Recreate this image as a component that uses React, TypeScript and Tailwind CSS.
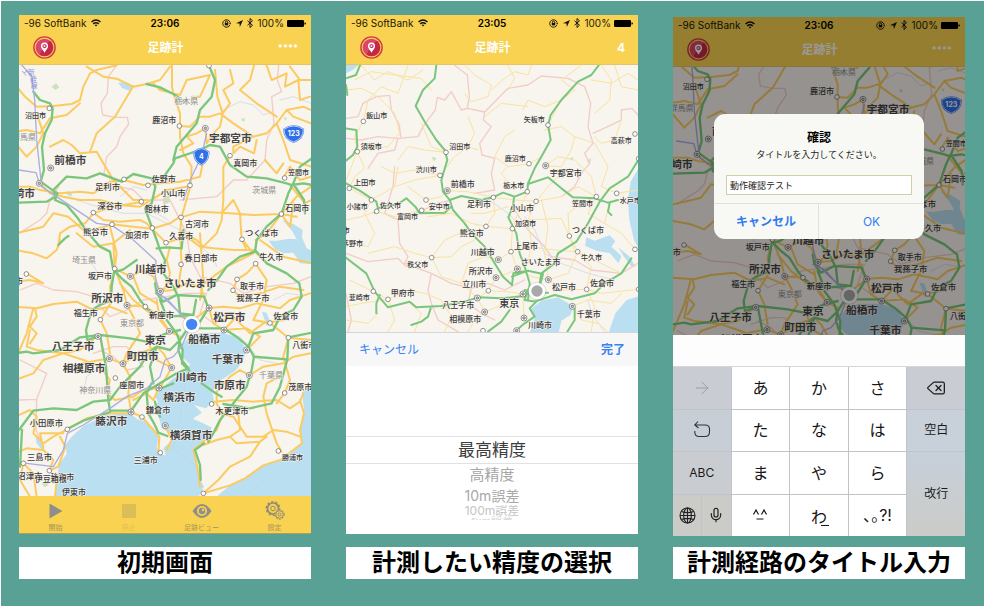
import React, { useId, useState } from "react";
import { ArrowRight, Delete, Mic } from "lucide-react";

type Label = [text: string, x: number, y: number, size: number];
type Point = [x: number, y: number];

interface MapData {
  water: string[];
  parks: string[];
  borders: string[];
  rails: string[];
  minor: string[];
  roads: string[];
  highways: string[];
  towns: Point[];
  cities: Point[];
  labels: Label[];
  regions: Label[];
}

const kantoSouth: MapData = {
  water: [
    "M165,1490L172,1430L178,1392L200,1362L196,1335L215,1310L250,1278L320,1245L390,1240L412,1258L440,1266L455,1290L476,1308L470,1340L476,1362L498,1366L490,1345L515,1322L510,1300L485,1285L478,1256L462,1225L474,1205L466,1190L482,1168L520,1135L560,1112L570,1092L545,1070L550,1030L575,1005L610,998L665,998L715,1012L740,1050L728,1085L706,1112L664,1140L636,1175L642,1200L618,1225L582,1215L606,1238L578,1256L606,1268L634,1282L632,1310L606,1325L580,1350L590,1385L596,1430L612,1460L596,1490Z",
    "M936,1150L906,1178L912,1228L902,1280L904,1330L880,1350L850,1376L790,1396L740,1432L690,1456L650,1490L936,1490Z",
    "M848,660L880,672L908,690L906,712L920,745L936,752L936,792L900,790L880,758L850,760L825,748L806,722L830,722L868,716L890,718L876,692Z",
    "M786,935L800,938L812,972L800,978Z",
    "M355,248L378,246L400,258L388,272L366,264Z",
    "M106,1304L118,1312L130,1340L124,1348L110,1330Z",
    "M200,572L216,580L214,590L202,584Z",
  ],
  parks: [
    "M155,260L168,250L178,262L166,270Z",
    "M488,592L508,586L510,606L490,614Z",
    "M126,1450L140,1440L146,1456L132,1462Z",
    "M724,356L734,354L734,364L726,364Z",
    "M850,354L860,352L858,362Z",
  ],
  borders: [
    "M350,196L325,230L322,280L303,310L308,345L345,352L382,352L386,372L360,410L350,440L320,470L312,520L360,560L400,570L430,600L510,600L530,640",
    "M836,196L832,240L845,275L815,290L822,370L800,420L795,480L740,540L700,540L650,590L540,600",
    "M176,560L150,600L140,640L120,660L57,700",
    "M60,870L110,850L160,870L230,875L280,890L300,920L330,950L380,930L430,900L500,890L560,880L620,880",
    "M530,640L560,700L570,770L600,830L690,850L730,880L800,860L880,850L933,830",
    "M57,1200L110,1198L140,1120L60,1080M280,1060L340,1040L380,1040L430,1100L380,1110L340,1070L300,1050",
    "M620,880L600,940L640,970",
    "M110,1200L108,1290L130,1340",
  ],
  rails: [
    "M66,196L96,230L104,300L110,420L125,560L200,610L290,670L336,676L400,720L468,782L466,830L478,880L530,930L572,975L545,1040L520,1070L495,1080L480,1130L440,1165L380,1190L330,1225L250,1275L202,1300L190,1350L160,1400L80,1390",
    "M57,510L108,518L118,550",
    "M550,600L575,530L604,470L620,400",
    "M466,880L500,895L572,975",
  ],
  minor: [
    "M670,330L720,305L760,315L790,345L820,335",
    "M840,300L880,290L933,310",
    "M200,590L260,610L310,625L370,640L440,640L500,670L560,700L600,740L640,770L650,800",
    "M360,590L400,560L440,570",
    "M720,1010L780,1080L830,1090",
    "M760,700L740,690L720,700",
    "M430,1430L520,1345L530,1300L550,1200L560,1110M520,1345L590,1400M730,1490L800,1440L840,1420M470,640L505,660",
    "M250,1180L260,1130L300,1100",
    "M820,900L860,880L900,885M270,780L300,830",
  ],
  roads: [
    "M46,255L75,290L110,320L160,318L215,312L240,300L250,260L270,220L290,210L350,196",
    "M46,395L80,390L120,400L150,355L200,345L240,310",
    "M150,440L190,420L215,435L240,460L290,455L310,490L340,540L400,600L440,600",
    "M46,430L80,470L110,440L130,400L110,340",
    "M260,200L310,230L350,236L400,260L440,252L480,240L510,200M400,258L345,350L290,400L270,455",
    "M516,196L516,260L520,280L540,340L540,378L540,410L550,460L575,500L572,556L545,650L540,700L545,793L535,860",
    "M460,250L480,270L540,285L560,240L630,225L600,290L575,290",
    "M540,378L570,380L600,350L630,350L660,340L700,370L760,410L800,400L830,370L860,330L910,320L933,330",
    "M645,210L652,290L668,340L660,380L640,400L620,430L616,385M668,340L690,310L670,270L700,250L690,210",
    "M762,196L750,240L720,270L770,310L830,350M800,196L815,240L860,220L855,260L895,240L900,300L930,290M870,200L900,240L933,240",
    "M760,410L700,440L700,460L720,440L762,460L770,420M616,385L590,400L560,410L580,430L540,450",
    "M860,330L880,350L933,370M830,370L850,420L870,480L933,500M795,480L830,520L850,490",
    "M690,467L670,500L670,600L665,660L650,700L610,740L590,720L550,700",
    "M46,560L90,560L120,570L180,580L240,575L280,580L330,545L372,540L430,555L480,550L540,545L600,530L610,480",
    "M120,550L150,580L190,590L240,600L300,600L360,615L420,620L470,590L500,570L560,560",
    "M46,700L90,690L130,680L160,640L205,650L250,690L280,690L336,673L400,680L456,686L510,670L540,650",
    "M175,740L180,700L210,680L255,670L280,640L340,620L424,606",
    "M280,638L310,660L360,665L420,660L440,670L470,700L498,728L560,710L600,740L640,745L700,750L760,750L800,790",
    "M46,750L100,760L140,775L170,750L180,720",
    "M330,680L350,760L344,806L330,860L332,910L301,959L320,1000L330,1060",
    "M230,700L280,740L340,730L390,690M340,730L344,806L391,829L430,810L460,830L480,874L500,860L510,820L500,780L510,740",
    "M344,806L370,870L381,916L400,950L420,1000L380,1060L369,1091L390,1130L385,1180L393,1236",
    "M381,916L436,920L480,950L508,994L540,1010M360,850L400,900L450,940M400,830L420,880L470,910",
    "M46,845L90,840L130,850L80,820M46,920L110,925L160,912L230,905L280,930L330,920L380,940",
    "M105,925L110,950L90,980L110,1000L90,1030M90,990L80,1040L110,1050L190,1060L240,1050L290,1010",
    "M46,1140L100,1120L130,1080L190,1060L250,1080L300,1100L330,1140L320,1180L345,1200L400,1190L430,1170L477,1164",
    "M250,1090L300,1080L328,1076L369,1091L420,1060L470,1040L490,1060L515,1103L480,1164",
    "M480,874L520,870L560,850L600,860L627,924L640,970L672,990L740,985L780,1010L750,1040",
    "M627,924L670,920L720,925L770,910L840,925L870,900L930,880M640,970L700,950L750,1000L790,970L850,960",
    "M600,860L640,830L680,800L720,780L760,760L726,718M600,700L610,840L600,900",
    "M543,652L600,635L690,640L760,645L844,642L890,590L933,560M664,640L700,600L720,640L725,718L740,750",
    "M767,791L740,820L711,838L699,871L720,890L780,880L840,860L910,870M767,720L800,700L844,642L890,650M780,720L850,770L933,790",
    "M844,642L870,680L880,610M850,534L870,500L900,540L933,530M870,555L915,610L933,600",
    "M767,791L800,840L790,900L760,960L810,969L865,1013L933,1020M865,1013L850,1070L870,1140L854,1179L830,1210",
    "M748,1126L790,1100L850,1090L880,1070L933,1060M748,1126L720,1110L690,1130L650,1175L650,1212L670,1240L650,1290L610,1325L580,1350L592,1400L600,1460",
    "M640,1205L700,1200L760,1205L830,1200L870,1225L900,1205L910,1180M660,1240L700,1250L720,1280L740,1310L790,1310L820,1290L860,1295L900,1310",
    "M610,1335L650,1320L690,1310L710,1330L780,1325L800,1310M690,1310L720,1290L715,1240M780,1325L750,1370L690,1400L655,1440L610,1480",
    "M800,1240L790,1190L800,1150L840,1130M800,1240L830,1330L845,1355M900,1200L912,1240L900,1290L906,1330L880,1350L845,1378L790,1396L735,1435L690,1456L610,1480",
    "M393,1236L426,1251L460,1290L478,1310L475,1360M496,1277L515,1320L500,1350M477,1164L460,1200L440,1180L400,1200",
    "M46,1250L90,1230L110,1250L100,1300L130,1330L160,1310L202,1288L260,1255L330,1240L390,1240",
    "M46,1360L80,1345L130,1350L160,1380L148,1412L175,1400L196,1340L180,1310M70,1390L60,1440L90,1490M148,1412L170,1440L165,1490",
    "M130,1345L120,1300L190,1300M70,1390L100,1420L110,1490",
    "M515,1103L470,1080L450,1040M508,994L480,960L470,900M540,950L580,960L627,924M672,990L700,960L660,940",
    "M46,1080L80,1000L100,925",
  ],
  highways: [
    "M100,275L120,300L150,310L158,325L155,360L135,400L126,440L132,510L122,545L150,565L172,580L165,600L200,615L230,650L265,700L300,740L330,755L338,800L345,815L370,840L395,860L420,900L440,925L460,940",
    "M46,608L140,605L166,590L160,570L200,530L260,535L300,520L365,545L400,522L455,535L490,532L520,490L525,475L600,450L630,435L660,440L690,495L740,530L800,535L860,550L875,555L910,550L936,555",
    "M627,197L645,240L635,290L600,330L590,370L530,440L520,480M455,535L466,560L455,610L435,625L455,680L470,720L480,750L495,780L490,820L520,860L535,890L540,940",
    "M440,252L480,262L520,282L560,310",
    "M936,475L900,500L880,550L865,580L845,640L800,680L770,720L765,755L720,770L680,800L655,835L625,870",
    "M765,750L800,790L860,820L898,850L905,890L880,930L840,950L820,990L760,1000L745,1040",
    "M880,552L912,600L915,640M175,735L195,715L205,708",
    "M410,780L370,808L342,818L335,860L334,880M470,745L500,742L545,745L550,690",
    "M46,1060L80,1055L100,1060L180,1050L240,1012L300,1005L390,1015L440,1025L500,1000L540,990",
    "M262,1020L258,990L275,930L300,915L325,905M262,1020L300,1008",
    "M300,1005L318,1100L325,1200L330,1232L390,1232",
    "M57,1290L100,1232L160,1225L230,1230L280,1205L330,1200L360,1160L420,1100L445,1060L470,1040",
    "M200,1288L250,1262L330,1236",
    "M455,1150L440,1180L445,1240L462,1270L475,1298L502,1308",
    "M395,1230L430,1180L480,1150L530,1120L565,1105L545,1080L535,1050L540,1020L560,990L600,965L625,925L612,890L530,885L490,905L470,880L465,850",
    "M600,985L670,985L710,1010L745,1040L762,1070L755,1110L740,1160L700,1210L660,1260L640,1300L625,1325",
    "M500,960L530,1000L548,1050L546,1090L568,1112M480,900L500,950L580,945L588,900M460,1150L450,1100L470,1040L510,1050L540,1020",
    "M760,1070L862,1078L865,1012L936,998M862,1078L840,1160L815,1210L750,1225L670,1212",
    "M605,1150L640,1175L665,1190M470,1170L520,1150",
    "M612,1330L585,1350L600,1395L602,1440M66,1290L60,1400M540,940L580,945M465,1205L470,1230L480,1250",
  ],
  towns: [
    [148, 325], [538, 378], [690, 467], [372, 538], [444, 556], [570, 556], [854, 534],
    [424, 605], [280, 638], [336, 673], [457, 684], [543, 652], [844, 642], [498, 728],
    [726, 718], [767, 791], [543, 793], [344, 806], [79, 822], [711, 838], [699, 871],
    [436, 920], [301, 959], [810, 969], [865, 1013], [346, 1134], [854, 1179], [635, 1212],
    [426, 1251], [202, 1288], [481, 1358], [70, 1390], [148, 1412], [835, 1353], [610, 1480],
    [627, 197],
  ],
  cities: [
    [616, 385], [152, 504], [118, 550], [391, 829], [481, 874], [381, 916], [627, 924],
    [672, 990], [508, 994], [294, 1009], [740, 1050], [748, 1126], [328, 1076], [369, 1091],
    [515, 1103], [477, 1164], [393, 1236], [496, 1277],
  ],
  labels: [
    ["宇都宮市", 627, 414, 32], ["前橋市", 163, 480, 32], ["高崎市", 9, 580, 32],
    ["川越市", 404, 806, 32], ["さいたま市", 491, 850, 32], ["所沢市", 274, 893, 32],
    ["松戸市", 640, 952, 32], ["東京", 434, 1020, 32], ["船橋市", 565, 1017, 32],
    ["八王子市", 155, 1038, 32], ["町田市", 380, 1068, 32], ["相模原市", 188, 1104, 32],
    ["川崎市", 526, 1131, 32], ["千葉市", 635, 1077, 32], ["市原市", 641, 1154, 32],
    ["横浜市", 490, 1192, 32], ["藤沢市", 286, 1263, 32], ["横須賀市", 509, 1304, 32],
    ["沼田市", 75, 345, 21], ["鹿沼市", 457, 359, 24], ["真岡市", 700, 489, 24],
    ["足利市", 285, 560, 25], ["佐野市", 455, 537, 24], ["小山市", 482, 580, 25],
    ["深谷市", 292, 619, 25], ["館林市", 434, 627, 24], ["熊谷市", 249, 696, 25],
    ["加須市", 376, 706, 24], ["久喜市", 508, 708, 24], ["古河市", 555, 673, 24],
    ["石岡市", 856, 623, 24], ["つくば市", 735, 698, 25], ["牛久市", 778, 771, 24],
    ["春日部市", 553, 774, 25], ["坂戸市", 264, 829, 24], ["取手市", 720, 859, 24],
    ["我孫子市", 709, 895, 25], ["新座市", 447, 944, 25], ["佐倉市", 820, 949, 25],
    ["福生市", 221, 940, 24], ["茂原市", 865, 1160, 24], ["八街市", 877, 1034, 24],
    ["座間市", 358, 1156, 25], ["鎌倉市", 437, 1231, 25], ["木更津市", 646, 1234, 25],
    ["小田原市", 89, 1268, 25], ["三島市", 81, 1370, 25], ["三浦市", 401, 1380, 24],
    ["沼津市", 52, 1428, 25], ["熱海市", 151, 1431, 24], ["伊東市", 186, 1475, 24],
    ["勝浦市", 846, 1372, 21], ["笠間市", 864, 517, 21], ["市", 45, 843, 24],
    ["伊豆箱根", 104, 1436, 24],
  ],
  regions: [
    ["栃木県", 523, 302, 24], ["群馬県", 36, 411, 24], ["茨城県", 757, 569, 24],
    ["埼玉県", 216, 780, 24], ["東京都", 360, 969, 24], ["神奈川県", 238, 1171, 24],
    ["千葉県", 777, 1124, 24],
  ],
};

const kantoWide: MapData = {
  water: [
    "M50,190L92,196L74,210L50,222Z",
    "M934,500L908,545L900,600L904,660L918,720L934,750Z",
    "M774,712L800,722L845,706L862,724L850,740L880,768L872,790L846,760L806,752L772,738Z",
    "M870,742L905,770L922,800L912,802L888,770Z",
    "M934,888L896,900L862,940L842,998L934,998Z",
    "M606,998L622,950L606,930L640,902L690,892L735,918L728,944L700,962L692,998Z",
  ],
  parks: ["M310,470L326,474L318,484Z", "M724,476L736,470L732,482Z", "M776,484L790,474L786,490Z"],
  borders: [
    "M380,196L418,225L424,290L418,325L400,330L370,275L350,300L328,292L322,330L285,380L270,410L210,415L200,450L150,460L120,505",
    "M54,355L90,350L105,310L145,290L185,286L190,330L214,375L218,410",
    "M418,325L470,336L540,265L600,255L640,228L720,235L770,260L788,310L780,380L795,430L770,460L785,490L760,520L740,560L700,590",
    "M470,336L466,360L490,380L455,430L462,465L500,475L490,520L500,570L440,580",
    "M54,415L100,420L150,410L210,415M795,400L860,370L880,360L880,330L912,325L930,345",
    "M200,500L195,560L170,640L210,660L215,730L240,770L230,790L310,820L370,850L430,865L480,850L530,870L590,840",
    "M54,760L120,785L210,775L235,800M310,820L300,870L310,910L330,960L390,995",
    "M430,865L420,910L460,940L500,960M560,630L600,690L650,740L670,770L740,780L790,810L880,820L930,790",
    "M54,880L70,960L60,995M370,600L330,610L240,650L210,640",
  ],
  rails: [],
  minor: [
    "M590,650L620,690L650,760L700,790L780,820L860,840",
    "M470,590L540,640L580,680",
    "M780,900L790,940L830,995",
  ],
  roads: [
    "M80,240L130,215L200,225L280,235L310,270M100,196L140,240L180,215L240,240L285,210",
    "M54,270L100,265L150,290L200,340L215,400L180,440L130,445L88,455",
    "M106,364L120,300L160,260L210,280L240,196M410,196L440,225L490,255L480,290L430,305L410,280",
    "M106,364L80,410L88,455L110,505L80,530L64,565M88,455L54,540",
    "M490,270L530,235L560,215L600,225L610,196M540,196L560,235L540,270",
    "M210,480L240,440L290,450L354,457M160,500L200,520L260,510L336,526L380,470L420,440L450,450",
    "M650,390L700,380L740,410L730,450L700,500L653,497M660,375L700,300L740,270L700,240L760,196",
    "M585,330L600,300L650,320L700,300M560,390L530,410L500,470L540,500L603,491L640,470",
    "M470,350L520,310L600,320M820,196L850,240L845,300L800,340M860,196L880,260L930,270M880,360L860,420L820,430L800,410",
    "M790,240L850,250L900,220L930,240M740,410L800,430L840,500L820,560L866,580L930,570",
    "M653,497L690,470L740,480L790,530L805,590L760,610L720,640L724,708",
    "M54,660L100,650L146,634L200,650L281,631L320,640L370,640M64,565L130,600L200,560L260,540L336,526",
    "M130,600L110,640L140,700L120,740L54,725M200,560L210,500M240,560L294,600L340,590L358,572",
    "M358,572L420,575L496,592L560,600L624,604L700,590L750,560L805,590",
    "M300,650L370,640L430,670L474,679L553,686L600,660L700,655L724,708L749,755L820,790L880,820",
    "M496,592L500,640L474,679L440,720L400,740L370,770L311,773L260,760L200,740L120,760",
    "M624,604L600,660L610,730L600,790L568,807L549,755L553,686",
    "M311,773L350,720L395,700M311,773L340,830L400,850L448,894M511,779L470,770L420,790L400,850",
    "M511,779L549,755L600,740L680,750L740,755L724,708M504,833L540,820L568,807L610,830L661,839",
    "M661,839L720,820L749,755L790,800L776,868L820,880L930,868M661,839L700,870L776,868",
    "M64,840L136,874L180,898L240,870L290,880L340,900M54,920L100,910L180,898L200,960L180,995",
    "M448,894L470,936L510,920L560,890L585,882L588,954M504,833L481,872L448,894M481,872L540,875L585,882",
    "M340,900L370,950L350,995M470,936L440,960L420,995M240,905L280,940L260,995M54,960L120,970L150,940",
    "M733,919L780,900L850,910L880,880M733,919L760,960L810,970L840,995M776,868L800,920L790,995",
    "M598,575L570,640L553,686M640,600L660,680L650,760L661,839M430,640L470,640L540,620",
    "M844,610L830,670L880,700L921,748M805,590L780,640L830,670M550,560L520,520L540,500",
    "M280,370L310,440L354,457M420,350L440,400L420,440M700,520L660,560L624,604",
  ],
  highways: [
    "M325,196L320,235L285,270L263,318L290,365L325,420L350,450L358,480L340,540L345,575L365,600L375,630L410,670L430,700L470,740L500,790L525,830L552,855L556,820L600,812",
    "M50,385L85,390L88,440L75,465L50,485",
    "M54,235L84,225L96,196M54,255L58,285",
    "M812,196L790,225L750,245L700,300L668,345L660,375L668,420L640,470L620,505L600,550L598,575L560,590L525,578L495,592L460,600L400,588L365,600",
    "M600,552L660,532L700,565L735,592L800,595L840,608L870,600",
    "M934,475L900,530L845,565L815,605L780,670L745,725L690,760L680,790L640,820L635,850",
    "M558,592L555,620L541,652L565,700L575,760L590,800L605,850L600,900",
    "M50,548L95,572L145,605L150,625L140,638M150,625L210,612L235,595L262,620L275,640L350,638L370,620",
    "M50,770L115,820L140,875L180,922L245,905L265,922L340,918L410,905L450,892L520,895L590,888M155,885L145,910L145,940",
    "M308,925L300,950L280,965L250,975",
    "M620,905L680,885L730,898L800,880L830,850L880,820L910,775",
    "M552,830L600,812L645,822L635,860L600,868L590,900L625,905L605,925L620,950L590,970L560,995M480,995L520,965L545,930",
    "M845,610L840,635L850,645M740,925L740,960L718,995M590,870L620,880L660,878",
  ],
  towns: [
    [106, 364], [88, 455], [354, 457], [660, 375], [603, 491], [921, 402], [336, 526],
    [64, 565], [130, 600], [146, 634], [281, 631], [294, 600], [496, 592], [598, 575],
    [624, 604], [805, 590], [866, 580], [474, 679], [553, 686], [724, 708], [549, 755],
    [749, 755], [921, 748], [311, 773], [136, 874], [180, 898], [481, 872], [776, 868],
    [932, 868], [465, 992], [932, 476],
  ],
  cities: [
    [653, 497], [358, 572], [511, 779], [568, 807], [504, 833], [661, 839], [585, 882],
    [448, 894], [470, 936], [733, 919], [588, 954], [566, 992],
  ],
  labels: [
    ["飯山市", 115, 347, 21], ["須坂市", 98, 438, 21], ["沼田市", 364, 440, 21],
    ["渋川市", 263, 508, 21], ["矢板市", 587, 357, 21], ["鹿沼市", 530, 474, 21],
    ["高萩市", 848, 420, 21], ["前橋市", 368, 551, 24], ["宇都宮市", 665, 520, 24],
    ["上田市", 77, 547, 22], ["小諸市", 56, 620, 21], ["佐久市", 156, 616, 21],
    ["富岡市", 207, 650, 21], ["安中市", 302, 619, 21], ["足利市", 417, 613, 24],
    ["栃木市", 526, 556, 21], ["小山市", 546, 625, 24], ["笠間市", 732, 610, 21],
    ["水戸市", 875, 602, 21], ["加須市", 561, 669, 21], ["熊谷市", 395, 700, 24],
    ["つくば市", 732, 690, 24], ["上尾市", 558, 737, 24], ["牛久市", 759, 773, 21],
    ["川越市", 428, 757, 24], ["さいたま市", 578, 787, 24], ["秩父市", 238, 793, 21],
    ["所沢市", 422, 813, 24], ["立川市", 403, 853, 24], ["松戸市", 672, 861, 24],
    ["佐倉市", 786, 850, 24], ["東京", 514, 909, 30], ["甲府市", 188, 880, 24],
    ["韮崎市", 62, 893, 21], ["八王子市", 343, 916, 24], ["相模原市", 364, 958, 24],
    ["川崎市", 600, 976, 24], ["千葉市", 746, 942, 24], ["茅野市", 42, 730, 21],
    ["市", 44, 692, 21],
  ],
  regions: [],
};

interface MapProps {
  data: MapData;
  viewBox: string;
  roadWidth: number;
  highwayWidth: number;
  roadColor: string;
  here: Point;
  hereColor: string;
  title: string;
  children?: React.ReactNode;
}

function MapView({ data, viewBox, roadWidth, highwayWidth, roadColor, here, hereColor, title, children }: MapProps) {
  return (
    <svg viewBox={viewBox} role="img" aria-label={title} className="block w-full overflow-hidden bg-[#f8f4ee]">
      <path d={data.water.join("")} fill="#b9dff1" />
      <path d={data.parks.join("")} fill="#c9e3bf" />
      <g fill="none" strokeLinejoin="round" strokeLinecap="round">
        <path d={data.borders.join("")} stroke="#f2cdc7" strokeWidth="4" />
        <path d={data.minor.join("")} stroke="#c9d2e4" strokeWidth="2" />
        <path d={data.roads.join("")} stroke={roadColor} strokeWidth={roadWidth} />
        <path d={data.highways.join("")} stroke="#79c67c" strokeWidth={highwayWidth} />
        <path d={data.rails.join("")} stroke="#a9aee0" strokeWidth="4" />
      </g>
      <g fill="#fff" stroke="#5e5e5e" strokeWidth="2">
        {data.towns.map(([x, y]) => (
          <circle key={`${x}-${y}`} cx={x} cy={y} r="7" />
        ))}
        {data.cities.map(([x, y]) => (
          <g key={`${x}-${y}`}>
            <circle cx={x} cy={y} r="9" />
            <circle cx={x} cy={y} r="4" fill="#bbb" />
          </g>
        ))}
      </g>
      {children}
      <g strokeLinejoin="round" stroke="#f8f4ee" strokeOpacity="0.8" strokeWidth="4" className="[paint-order:stroke]">
        {data.regions.map(([text, x, y, size]) => (
          <text key={text} x={x} y={y + size * 0.37} fontSize={size} fill="#8c8c8c">
            {text}
          </text>
        ))}
        {data.labels.map(([text, x, y, size]) => (
          <text
            key={`${text}-${y}`}
            x={x}
            y={y + size * 0.37}
            fontSize={size}
            fontWeight={size > 30 ? 700 : 500}
            fill={size > 30 ? "#444" : "#3a3a3a"}
          >
            {text}
          </text>
        ))}
      </g>
      <circle cx={here[0]} cy={here[1]} r="28" fill="#8a8a8a" opacity="0.25" />
      <circle cx={here[0]} cy={here[1]} r="25" fill="#fff" />
      <circle cx={here[0]} cy={here[1]} r="17" fill={hereColor} />
    </svg>
  );
}

function Shield({ x, y, halfWidth: w, text }: { x: number; y: number; halfWidth: number; text: string }) {
  return (
    <g transform={`translate(${x} ${y})`}>
      <path
        d={`M${-w},-14Q${-w / 2},-24 0,-24Q${w / 2},-24 ${w},-14Q${w},14 0,24Q${-w},14 ${-w},-14Z`}
        fill="#2f6fe8"
        stroke="#2f6fe8"
        strokeWidth="5"
      />
      <path
        d={`M${-w},-14Q${-w / 2},-24 0,-24Q${w / 2},-24 ${w},-14Q${w},14 0,24Q${-w},14 ${-w},-14Z`}
        fill="#2f6fe8"
        stroke="#fff"
        strokeWidth="2"
      />
      <text y="7" textAnchor="middle" fontSize="21" fontWeight="700" fill="#fff">
        {text}
      </text>
    </g>
  );
}

function SouthMap({ viewBox, hereColor, title }: { viewBox: string; hereColor: string; title: string }) {
  return (
    <MapView
      data={kantoSouth}
      viewBox={viewBox}
      roadWidth={6}
      highwayWidth={7}
      roadColor="#fbcb62"
      here={[575, 973]}
      hereColor={hereColor}
      title={title}
    >
      <Shield x={604} y={470} halfWidth={22} text="4" />
      <Shield x={881} y={402} halfWidth={29} text="123" />
      <g fill="#8b93d6" fontSize="20">
        <text x="66" y="212" transform="rotate(50 66 212)">上</text>
        <text x="84" y="226">新</text>
        <text x="90" y="245">幹</text>
        <text x="92" y="264">線</text>
      </g>
    </MapView>
  );
}

function StatusBar({ time }: { time: string }) {
  return (
    <div className="grid h-4 grid-cols-[1fr_auto_1fr] items-center px-[5px] font-['Inter','Noto_Sans_CJK_JP',sans-serif] text-[10px] leading-4 text-[#1c1805]">
      <span className="flex items-center gap-[5px] whitespace-nowrap">
        -96 SoftBank
        <svg viewBox="0 0 20 15" className="h-2 w-[10px]" fill="none" stroke="#111" strokeWidth="2.8">
          <path d="M1 5.5Q10-2.5 19 5.5M4.5 9.3Q10 4.6 15.5 9.3" />
          <path d="M7.3 11.5Q10 9.3 12.7 11.5L10 14.4Z" fill="#111" stroke="none" />
        </svg>
      </span>
      <span className="font-semibold text-black">{time}</span>
      <span className="flex items-center justify-end gap-1">
        <svg viewBox="0 0 24 24" className="h-[9px] w-[9px]" fill="none" stroke="#111" strokeWidth="2.4">
          <path d="M21.5 9A10 10 0 1 0 21.5 15M18.5 9.5L22 13L25 9" />
          <rect x="7.5" y="10.5" width="9" height="6.5" fill="#111" stroke="none" />
          <path d="M9 11V8.500a3 3 0 0 1 6 0V11" />
        </svg>
        <svg viewBox="0 0 20 20" className="ml-px h-[7px] w-[7px]" fill="#111">
          <path d="M20 0L11 20L10 10L0 9Z" />
        </svg>
        <svg viewBox="0 0 12 20" className="h-[10px] w-[6px]" fill="none" stroke="#111" strokeWidth="1.9">
          <path d="M1 5.500L11 14.500L6 19V1L11 5.500L1 14.500" />
        </svg>
        <span>100%</span>
        <svg viewBox="0 0 38 14" className="-ml-px h-[7px] w-[19px]" fill="#000">
          <rect width="34" height="14" rx="2.500" />
          <path d="M35 4.500Q38 5 38 7Q38 9 35 9.500Z" />
        </svg>
      </span>
    </div>
  );
}

function Logo() {
  const gradient = useId();
  return (
    <svg viewBox="0 0 48 48" className="h-[23px] w-[23px]">
      <defs>
        <linearGradient id={gradient} x1="0.1" y1="0.2" x2="0.9" y2="0.8">
          <stop offset="0.5" stopColor="#d9456b" />
          <stop offset="0.5" stopColor="#c42846" />
        </linearGradient>
      </defs>
      <circle cx="24" cy="24" r="22.200" fill="#fbd04c" stroke="#d13a4f" strokeWidth="3" />
      <circle cx="24" cy="24" r="18.500" fill={`url(#${gradient})`} />
      <path
        d="M24 35C21 29 16.500 26 16.500 21a7.500 7.500 0 0 1 15 0C31.500 26 27 29 24 35ZM24 16.500a4.500 4.500 0 1 0 0 9a4.500 4.500 0 0 0 0-9Z"
        fill="#fff"
        fillRule="evenodd"
      />
      <circle cx="24" cy="21" r="1.800" fill="#fff" />
    </svg>
  );
}

function NavBar({ time, accuracy }: { time: string; accuracy: string }) {
  return (
    <header className="flex h-[50px] flex-col bg-[#f8d250]">
      <StatusBar time={time} />
      <div className="grid flex-1 grid-cols-[1fr_auto_1fr] items-center border-b border-[#e2c469] pr-[13px] pl-[14px]">
        <Logo />
        <h2 className="text-[12px] leading-4 font-bold text-white">足跡計</h2>
        <button
          type="button"
          aria-label="精度"
          className={`justify-self-end leading-4 font-bold text-white ${accuracy === "****" ? "text-[9px]" : "text-[12px]"}`}
        >
          {accuracy}
        </button>
      </div>
    </header>
  );
}

function TabBar() {
  const item = "flex flex-col items-center justify-between pt-[3px] pb-px text-[7px] leading-[9px]";
  return (
    <nav className="grid h-[38px] grid-cols-4 border-b border-[#b39e55] bg-[#f8d250]">
      <button type="button" className={`${item} text-[#a9955a]`}>
        <svg viewBox="0 0 24 24" className="h-6 w-6" fill="#8f8e8b">
          <path d="M5.500 4.500L18.500 12L5.500 19.500Z" />
        </svg>
        開始
      </button>
      <button type="button" disabled className={`${item} text-[#dcbe58]`}>
        <svg viewBox="0 0 24 24" className="h-6 w-6" fill="#dcbe58">
          <rect x="5" y="5" width="14" height="14" />
        </svg>
        停止
      </button>
      <button type="button" className={`${item} text-[#a9955a]`}>
        <svg viewBox="0 0 24 24" className="h-6 w-6" fill="#8f8e8b">
          <path d="M2.500 12Q7 5 12 5Q17 5 21.500 12Q17 19 12 19Q7 19 2.500 12Z" />
          <circle cx="12" cy="12" r="5" fill="#f8d250" />
          <circle cx="12" cy="12" r="3.200" />
          <circle cx="13" cy="11" r="1.200" fill="#f8d250" />
        </svg>
        足跡ビュー
      </button>
      <button type="button" className={`${item} text-[#a9955a]`}>
        <svg viewBox="0 0 24 24" className="h-6 w-6" fill="none" stroke="#8f8a78">
          <circle cx="10" cy="9.500" r="5.500" strokeWidth="1.600" />
          <circle cx="10" cy="9.500" r="6.700" strokeWidth="1.400" strokeDasharray="2.400 1.800" />
          <circle cx="10" cy="9.500" r="2.300" strokeWidth="1" />
          <circle cx="16.500" cy="15.500" r="4.800" fill="#f8d250" stroke="none" />
          <circle cx="16.500" cy="15.500" r="3.800" strokeWidth="1" />
          <circle cx="16.500" cy="15.500" r="4.700" strokeWidth="1" strokeDasharray="1.700 1.300" />
          <circle cx="16.500" cy="15.500" r="1.500" strokeWidth="1" />
        </svg>
        設定
      </button>
    </nav>
  );
}

function AccuracyPicker() {
  return (
    <div>
      <div className="flex h-[34px] items-center justify-between border-t border-[#d5d5d5] bg-[#f7f7f8] px-[13px] leading-4 text-[#3b83f0]">
        <button type="button" className="text-[12px]">キャンセル</button>
        <button type="button" className="text-[12px] font-bold">完了</button>
      </div>
      <ul className="flex h-[168px] flex-col items-stretch bg-white pt-[70px] text-center">
        <li className="flex h-7 items-center justify-center border-y border-[#e2e2e2] text-[17px] leading-6 text-[#3c3c3c]">
          <button type="button">最高精度</button>
        </li>
        <li className="flex h-[22px] items-center justify-center text-[15px] leading-5 text-[#a6a6a6]">
          <button type="button">高精度</button>
        </li>
        <li className="flex h-[19px] items-center justify-center text-[14px] leading-4 text-[#a8a8a8]">
          <button type="button">10m誤差</button>
        </li>
        <li className="flex h-[11px] items-center justify-center overflow-hidden text-[12px] leading-3 text-[#c4c4c4]">
          <button type="button">100m誤差</button>
        </li>
        <li className="flex h-1 items-start justify-center overflow-hidden text-[11px] leading-3 text-[#d8d8d8]">
          <button type="button">1km誤差</button>
        </li>
      </ul>
    </div>
  );
}

function ConfirmDialog() {
  const [title, setTitle] = useState("動作確認テスト");
  return (
    <div
      role="dialog"
      aria-label="確認"
      className="absolute inset-x-[41px] top-[97px] flex flex-col overflow-hidden rounded-[11px] bg-[#f8f9f4] text-center"
    >
      <div className="px-3 pt-[15px] pb-2">
        <h3 className="text-[12px] leading-[18px] font-bold text-black">確認</h3>
        <label htmlFor="route-title" className="block text-[9px] leading-4 text-[#1b1b1b]">
          タイトルを入力してください。
        </label>
        <input
          id="route-title"
          value={title}
          onChange={(e) => setTitle(e.target.value)}
          className="mt-3 block h-5 w-full border border-[#c9d3a4] bg-white px-[3px] text-[9px] leading-4 text-[#1b1b1b] outline-none"
        />
      </div>
      <div className="grid h-9 grid-cols-2 divide-x divide-[#dfe2da] border-t border-[#dfe2da] text-[#2f7cf2]">
        <button type="button" className="text-[12px] leading-4 font-bold">キャンセル</button>
        <button type="button" className="text-[12px] leading-4">OK</button>
      </div>
    </div>
  );
}

function Keyboard() {
  const kana = "bg-white text-[16px] leading-6 text-[#151515]";
  const side = "flex items-center justify-center text-[12px] leading-4 text-[#1a1a1a]";
  return (
    <div>
      <div className="h-8 border-b border-[#d4d7da] bg-[#fdfdfe]" />
      <div className="grid h-[169px] grid-cols-5 grid-rows-4 gap-px bg-[#c0c4c9]">
        <button type="button" aria-label="次候補" className={`${side} bg-[#c9cdd3]`}>
          <ArrowRight className="h-5 w-5 text-[#92969b]" strokeWidth={1} />
        </button>
        <button type="button" className={kana}>あ</button>
        <button type="button" className={kana}>か</button>
        <button type="button" className={kana}>さ</button>
        <button type="button" aria-label="削除" className={`${side} bg-[#c9ccd2]`}>
          <Delete className="h-5 w-5" strokeWidth={1.5} />
        </button>

        <button type="button" aria-label="戻す" className={`${side} bg-[#c7ced6]`}>
          <svg viewBox="0 0 20 20" className="h-5 w-5" fill="none" stroke="#333" strokeWidth="1.1">
            <path d="M6 1.500L2.800 5L6.500 8M3 5H13Q17.500 5 17.500 9V12Q17.500 16.500 13 16.500H7Q2.800 16.500 2.800 12V11" />
          </svg>
        </button>
        <button type="button" className={kana}>た</button>
        <button type="button" className={kana}>な</button>
        <button type="button" className={kana}>は</button>
        <button type="button" className={`${side} bg-[#c8d0da]`}>空白</button>

        <button type="button" className={`${side} bg-[#c9cdd2]`}>ABC</button>
        <button type="button" className={kana}>ま</button>
        <button type="button" className={kana}>や</button>
        <button type="button" className={kana}>ら</button>
        <button type="button" className="row-span-2 bg-linear-to-b from-[#c6cfda] to-[#cbccc8] text-[12px] leading-4 text-[#1a1a1a]">
          改行
        </button>

        <div className="grid grid-cols-2 gap-px">
          <button type="button" aria-label="言語" className="flex items-center justify-center bg-[#cbccc8]">
            <svg viewBox="0 0 20 20" className="h-[17px] w-[17px]" fill="none" stroke="#222" strokeWidth="1.3">
              <circle cx="10" cy="10" r="8.800" />
              <ellipse cx="10" cy="10" rx="4.500" ry="8.800" />
              <path d="M10 1V19M1.200 10H18.800M2.800 5.200Q10 8 17.200 5.200M2.800 14.800Q10 12 17.200 14.800" />
            </svg>
          </button>
          <button type="button" aria-label="音声入力" className="flex items-center justify-center bg-[#cbccc8]">
            <Mic className="h-4 w-4 text-[#222]" strokeWidth={1.8} />
          </button>
        </div>
        <button type="button" aria-label="顔文字" className="flex items-center justify-center bg-white">
          <svg viewBox="0 0 26 24" className="h-6 w-[26px]" fill="none" stroke="#151515" strokeWidth="1.200">
            <path d="M6.500 11.500L9 7L11.500 11.500M14.500 11.500L17 7L19.500 11.500M9.500 16H16.500" />
          </svg>
        </button>
        <button type="button" className={`${kana} flex flex-col items-center justify-center`}>
          わ
          <span className="-mt-1 ml-3 h-px w-2 bg-[#151515]" />
        </button>
        <button type="button" className={`${kana} [font-feature-settings:'palt']`}>、。?!</button>
      </div>
    </div>
  );
}

function Screen({ caption, className = "", children }: { caption: string; className?: string; children: React.ReactNode }) {
  return (
    <figure className="flex min-w-0 flex-col justify-between gap-[11px]">
      <div className={`relative ${className}`}>{children}</div>
      <figcaption className="bg-white text-center text-[24px] leading-8 font-bold text-black">{caption}</figcaption>
    </figure>
  );
}

export default function App() {
  return (
    <main
      lang="ja"
      className="min-h-screen border-t border-l border-white bg-[#59a195] pt-[14px] pr-[19px] pb-6 pl-[18px] font-['Inter','Noto_Sans_CJK_JP',sans-serif]"
    >
      <div className="grid grid-cols-3 gap-[35px]">
        <Screen caption="初期画面">
          <NavBar time="23:06" accuracy="****" />
          <SouthMap viewBox="57 195 876 1293" hereColor="#4285f4" title="関東の地図" />
          <TabBar />
        </Screen>

        <Screen caption="計測したい精度の選択">
          <NavBar time="23:05" accuracy="4" />
          <MapView
            data={kantoWide}
            viewBox="54 195 876 801"
            roadWidth={3}
            highwayWidth={6}
            roadColor="#f8e3a0"
            here={[627, 873]}
            hereColor="#a9a9a9"
            title="関東広域の地図"
          />
          <AccuracyPicker />
        </Screen>

        <Screen caption="計測経路のタイトル入力" className="mt-[2px]">
          <div className="relative">
            <NavBar time="23:06" accuracy="****" />
            <SouthMap viewBox="46 288 876 804" hereColor="#a9a9a9" title="関東の地図" />
            <div className="absolute inset-0 bg-black/40" />
          </div>
          <ConfirmDialog />
          <Keyboard />
        </Screen>
      </div>
    </main>
  );
}
